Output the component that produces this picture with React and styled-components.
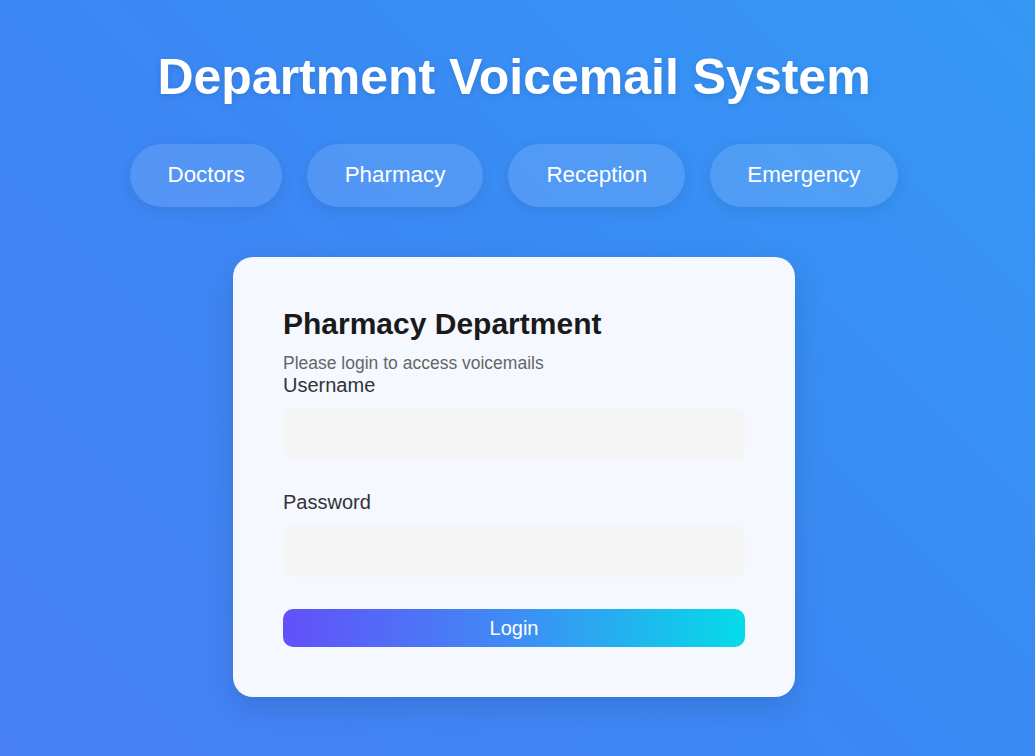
import React, { useState } from "react";
import styled, { createGlobalStyle } from "styled-components";

const GlobalStyle = createGlobalStyle`
  html, body {
    margin: 0;
    padding: 0;
  }
  body {
    font-family: "Liberation Sans", Arial, sans-serif;
    min-height: 100vh;
    background: linear-gradient(45deg, #4680f4 0%, #3b88f4 50%, #3598f4 100%);
  }
`;

const Main = styled.main`
  min-height: 100vh;
  display: flex;
  flex-direction: column;
  align-items: center;
  padding: 50px 7px 0 0;
  box-sizing: border-box;
`;

const Title = styled.h1`
  margin: 0;
  font-size: 50px;
  line-height: 55px;
  font-weight: bold;
  color: #fff;
  text-shadow: 0 2px 6px rgba(0, 0, 0, 0.12);
`;

const Nav = styled.nav`
  display: flex;
  gap: 25px;
  margin-top: 39px;
`;

const NavButton = styled.button`
  height: 63px;
  padding: 0 ${(p) => p.$pad || 38}px 2px;
  border: none;
  border-radius: 32px;
  background: rgba(255, 255, 255, 0.12);
  color: #fff;
  font-family: "Liberation Sans", Arial, sans-serif;
  font-size: 22.4px;
  box-shadow: 0 4px 15px rgba(0, 0, 0, 0.08);
  cursor: pointer;
`;

const Card = styled.section`
  width: 562px;
  box-sizing: border-box;
  margin-top: 50px;
  padding: 50px;
  background: #f5f8fe;
  border-radius: 20px;
  box-shadow: 0 10px 30px rgba(0, 0, 0, 0.12);
`;

const Heading = styled.h2`
  margin: 0;
  font-size: 30px;
  line-height: 34px;
  color: #1a1a1a;
`;

const Subtitle = styled.p`
  margin: 12px 0 0;
  font-size: 17.5px;
  line-height: 21px;
  color: #666;
`;

const Field = styled.div`
  display: flex;
  flex-direction: column;
  margin-bottom: 31px;
`;

const Label = styled.label`
  font-size: 20px;
  line-height: 23px;
  color: #333;
  margin-bottom: 11px;
`;

const Input = styled.input`
  height: 52px;
  border: none;
  border-radius: 10px;
  background: #f5f5f5;
  padding: 0 16px;
  font-size: 18px;
  outline: none;
`;

const LoginButton = styled.button`
  width: 100%;
  height: 38px;
  margin-top: 1px;
  border: none;
  border-radius: 10px;
  background: linear-gradient(90deg, #6250f9 0%, #3f8cf5 50%, #04dce8 100%);
  color: #fff;
  font-family: "Liberation Sans", Arial, sans-serif;
  font-size: 20px;
  cursor: pointer;
`;

const departments = [
  { name: "Doctors", pad: 37 },
  { name: "Pharmacy", pad: 38 },
  { name: "Reception", pad: 38 },
  { name: "Emergency", pad: 37 },
];

const App = () => {
  const [form, setForm] = useState({ username: "", password: "" });

  return (
    <>
      <GlobalStyle />
      <Main>
        <Title>Department Voicemail System</Title>
        <Nav>
          {departments.map((d) => (
            <NavButton key={d.name} $pad={d.pad}>
              {d.name}
            </NavButton>
          ))}
        </Nav>
        <Card>
          <Heading>Pharmacy Department</Heading>
          <Subtitle>Please login to access voicemails</Subtitle>
          <form onSubmit={(e) => e.preventDefault()}>
            <Field>
              <Label htmlFor="username">Username</Label>
              <Input
                id="username"
                value={form.username}
                onChange={(e) => setForm({ ...form, username: e.target.value })}
              />
            </Field>
            <Field>
              <Label htmlFor="password">Password</Label>
              <Input
                id="password"
                type="password"
                value={form.password}
                onChange={(e) => setForm({ ...form, password: e.target.value })}
              />
            </Field>
            <LoginButton type="submit">Login</LoginButton>
          </form>
        </Card>
      </Main>
    </>
  );
};

export default App;
